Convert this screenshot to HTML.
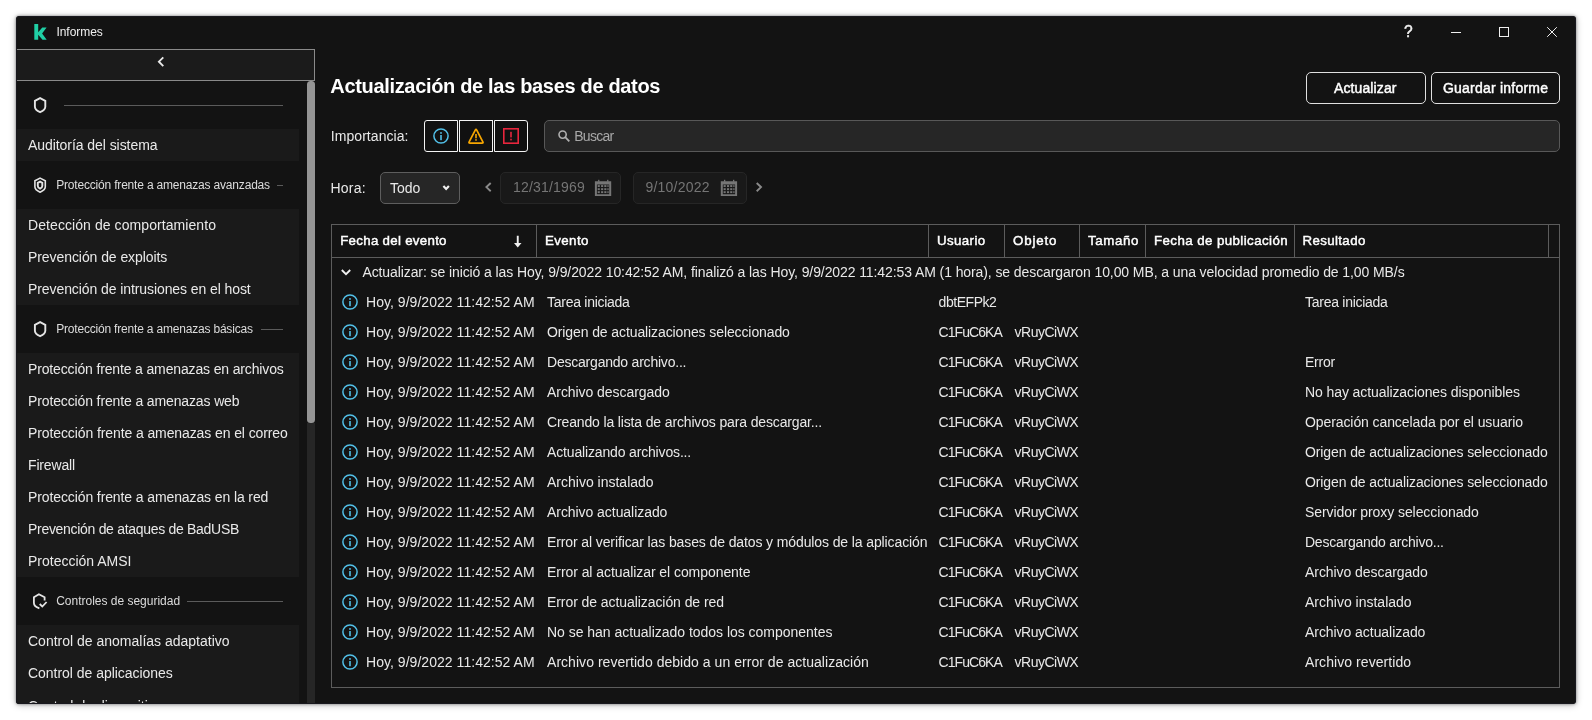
<!DOCTYPE html>
<html lang="es"><head><meta charset="utf-8"><title>Informes</title>
<style>
html,body{margin:0;padding:0;background:#fff;}
body{width:1592px;height:720px;position:relative;overflow:hidden;font-family:"Liberation Sans",sans-serif;}
#win{position:absolute;left:16px;top:16px;width:1560px;height:688px;background:#131313;border-radius:3px;overflow:hidden;
}
#shadow{position:absolute;left:16px;top:16px;width:1560px;height:688px;border-radius:3px;box-shadow:0 0 3px rgba(0,0,0,.45),0 1px 7px rgba(0,0,0,.27);}
.abs{position:absolute;}
.t{position:absolute;white-space:nowrap;line-height:20px;height:20px;font-family:"Liberation Sans",sans-serif;}
svg{position:absolute;overflow:visible;}
</style></head><body>
<div id="shadow"></div>
<div id="win"></div>
<div id="ui" class="abs" style="left:16px;top:16px;width:1560px;height:688px;overflow:hidden;border-radius:3px;will-change:transform;"><div class="abs" style="left:-16px;top:-16px;width:1592px;height:720px;">

<div class="abs" style="left:16px;top:49px;width:298px;height:30px;background:#1b1b1b;border:1px solid #8a8a8a;border-left:none;"></div>
<svg style="left:157px;top:56px" width="8" height="12" viewBox="0 0 8 12"><path d="M6.3 1.3 L1.9 5.7 L6.3 10.1" fill="none" stroke="#e8e8e8" stroke-width="1.9"/></svg>
<div class="abs" style="left:16px;top:129px;width:283px;height:32px;background:#1a1a1a;"></div>
<div class="abs" style="left:16px;top:209px;width:283px;height:96px;background:#1a1a1a;"></div>
<div class="abs" style="left:16px;top:353px;width:283px;height:224px;background:#1a1a1a;"></div>
<div class="abs" style="left:16px;top:625px;width:283px;height:79px;background:#1a1a1a;"></div>
<div class="abs" style="left:307px;top:423px;width:8px;height:281px;background:#262626;"></div>
<div class="abs" style="left:307px;top:81px;width:8px;height:342px;background:#959595;border-radius:3.5px;"></div>
<div class="abs" style="left:64px;top:105px;width:219px;height:1px;background:#5b5b5b;"></div>
<div class="abs" style="left:277px;top:185px;width:6px;height:1px;background:#5b5b5b;"></div>
<div class="abs" style="left:261px;top:329px;width:22px;height:1px;background:#5b5b5b;"></div>
<div class="abs" style="left:187.3px;top:601px;width:95.7px;height:1px;background:#5b5b5b;"></div>
<svg style="left:0;top:0" width="320" height="704" viewBox="0 0 320 704">
<path d="M40.1 98.1 L45.3 100.8 V106.8 C45.3 109.1 43.1 110.9 40.1 112.15 C37.1 110.9 34.9 109.1 34.9 106.8 V100.8 Z" fill="none" stroke="#e4e4e4" stroke-width="1.9"/>
<path d="M40.1 178.1 L45.3 180.8 V186.8 C45.3 189.1 43.1 190.9 40.1 192.15 C37.1 190.9 34.9 189.1 34.9 186.8 V180.8 Z" fill="none" stroke="#e4e4e4" stroke-width="1.6"/>
<path d="M40.05 181.7 L42.3 182.9 V186 C42.3 187.2 41.4 188 40.05 188.6 C38.7 188 37.8 187.2 37.8 186 V182.9 Z" fill="none" stroke="#e4e4e4" stroke-width="1.9"/>
<path d="M40.1 322.1 L45.3 324.8 V330.8 C45.3 333.1 43.1 334.9 40.1 336.15 C37.1 334.9 34.9 333.1 34.9 330.8 V324.8 Z" fill="none" stroke="#e4e4e4" stroke-width="1.9"/>
<path d="M44.6 600.4 V597.3 L38.9 594.2 L33.9 597.3 V603 C33.9 605.6 36 607.2 39.4 608.3" fill="none" stroke="#e4e4e4" stroke-width="1.8"/>
<path d="M39.7 604 L42.3 606.5 L46.6 602" fill="none" stroke="#e4e4e4" stroke-width="1.8"/>
</svg>
<svg style="left:0;top:0" width="60" height="48" viewBox="0 0 60 48"><path d="M34.3 24.1 H38.2 V39.8 H34.3 Z M38.2 32.2 L42.3 27.5 H46.6 L42.1 33.6 L46.7 39.8 H42.5 L38.2 34.8 Z" fill="#20cfa5"/></svg>
<div class="abs" style="left:1451px;top:32px;width:10px;height:1px;background:#f0f0f0;"></div>
<div class="abs" style="left:1499px;top:27px;width:8px;height:8px;border:1px solid #f0f0f0;"></div>
<svg style="left:1547px;top:27px" width="10" height="10" viewBox="0 0 10 10"><path d="M0.2 0.2 L9.8 9.8 M9.8 0.2 L0.2 9.8" stroke="#f0f0f0" stroke-width="1" fill="none"/></svg>
<div class="abs" style="left:1306px;top:72px;width:118px;height:30px;border:1px solid #e0e0e0;border-radius:5px;"></div>
<div class="abs" style="left:1431px;top:72px;width:127px;height:30px;border:1px solid #e0e0e0;border-radius:5px;"></div>
<div class="abs" style="left:424px;top:120px;width:32px;height:30px;border:1px solid #f4f4f4;border-radius:3px 0 0 3px;background:#111;"></div>
<div class="abs" style="left:459px;top:120px;width:32px;height:30px;border:1px solid #f4f4f4;border-radius:0;background:#111;"></div>
<div class="abs" style="left:494px;top:120px;width:32px;height:30px;border:1px solid #f4f4f4;border-radius:0 3px 3px 0;background:#111;"></div>
<svg style="left:433px;top:128px" width="16" height="16" viewBox="0 0 16 16"><circle cx="8" cy="8" r="7.1" fill="none" stroke="#52c0e8" stroke-width="1.5"/><rect x="7.2" y="7" width="1.6" height="5.2" fill="#52c0e8"/><rect x="7.2" y="4.1" width="1.6" height="1.7" fill="#52c0e8"/></svg>
<svg style="left:468px;top:128px" width="16" height="16" viewBox="0 0 16 16"><path d="M8.74 2.02 L14.86 13.78 Q15.6 15.2 14 15.2 L2 15.2 Q0.4 15.2 1.14 13.78 L7.26 2.02 Q8 0.6 8.74 2.02 Z" fill="none" stroke="#f7a600" stroke-width="1.7" stroke-linejoin="round"/><rect x="7.2" y="6" width="1.6" height="4.3" fill="#f7a600"/><rect x="7.2" y="11.2" width="1.6" height="1.5" fill="#f7a600"/></svg>
<svg style="left:503px;top:128px" width="16" height="16" viewBox="0 0 16 16"><rect x="0.8" y="0.8" width="14.4" height="14.4" fill="none" stroke="#e8263d" stroke-width="1.6"/><rect x="7.2" y="3.8" width="1.6" height="5.6" fill="#e8263d"/><rect x="7.2" y="10.7" width="1.6" height="1.7" fill="#e8263d"/></svg>
<div class="abs" style="left:544px;top:120px;width:1014px;height:30px;border:1px solid #585858;border-radius:5px;background:#262626;"></div>
<svg style="left:558px;top:130.3px" width="12" height="12" viewBox="0 0 12 12"><circle cx="4.6" cy="4.6" r="3.6" fill="none" stroke="#b0b0b0" stroke-width="1.6"/><path d="M7.2 7.2 L11.3 11.3" stroke="#b0b0b0" stroke-width="1.8" fill="none"/></svg>
<div class="abs" style="left:380px;top:172px;width:78px;height:30px;border:1px solid #5e5e5e;border-radius:5px;background:#262626;"></div>
<svg style="left:0;top:0" width="800" height="220" viewBox="0 0 800 220"><path d="M443.4 186.1 L446.15 188.9 L448.9 186.1" fill="none" stroke="#f0f0f0" stroke-width="2.2"/></svg>
<div class="abs" style="left:500px;top:172px;width:119px;height:30px;border:1px solid #262626;border-radius:5px;background:#191919;"></div>
<div class="abs" style="left:633px;top:172px;width:112px;height:30px;border:1px solid #262626;border-radius:5px;background:#191919;"></div>
<svg style="left:0;top:0" width="800" height="220" viewBox="0 0 800 220"><path d="M490.7 183 L486.4 187.1 L490.7 191.2" fill="none" stroke="#8a8a8a" stroke-width="1.9"/><path d="M756.7 183 L761 187.1 L756.7 191.2" fill="none" stroke="#8a8a8a" stroke-width="1.9"/></svg>
<svg style="left:0;top:0" width="800" height="220" viewBox="0 0 800 220"><path d="M594.9 181.2 H611.2 V196 H594.9 Z M596.9 184.6 V194.2 H609.2 V184.6 Z" fill="#767676" fill-rule="evenodd"/><rect x="598.1" y="179.8" width="1.3" height="2" fill="#767676"/><rect x="607.1" y="179.8" width="1.3" height="2" fill="#767676"/><rect x="597.7" y="185.1" width="2.1" height="1.9" fill="#767676"/><rect x="601.1" y="185.1" width="2.1" height="1.9" fill="#767676"/><rect x="604.3" y="185.1" width="2.1" height="1.9" fill="#767676"/><rect x="607.4" y="185.1" width="1.2" height="1.9" fill="#767676"/><rect x="597.7" y="188.2" width="2.1" height="1.9" fill="#767676"/><rect x="601.1" y="188.2" width="2.1" height="1.9" fill="#767676"/><rect x="604.3" y="188.2" width="2.1" height="1.9" fill="#767676"/><rect x="607.4" y="188.2" width="1.2" height="1.9" fill="#767676"/><rect x="597.7" y="191.2" width="2.1" height="1.9" fill="#767676"/><rect x="601.1" y="191.2" width="2.1" height="1.9" fill="#767676"/><rect x="604.3" y="191.2" width="2.1" height="1.9" fill="#767676"/><rect x="607.4" y="191.2" width="1.2" height="1.9" fill="#767676"/><path d="M720.8 181.2 H737.1 V196 H720.8 Z M722.8 184.6 V194.2 H735.1 V184.6 Z" fill="#767676" fill-rule="evenodd"/><rect x="724" y="179.8" width="1.3" height="2" fill="#767676"/><rect x="733" y="179.8" width="1.3" height="2" fill="#767676"/><rect x="723.6" y="185.1" width="2.1" height="1.9" fill="#767676"/><rect x="727" y="185.1" width="2.1" height="1.9" fill="#767676"/><rect x="730.2" y="185.1" width="2.1" height="1.9" fill="#767676"/><rect x="733.3" y="185.1" width="1.2" height="1.9" fill="#767676"/><rect x="723.6" y="188.2" width="2.1" height="1.9" fill="#767676"/><rect x="727" y="188.2" width="2.1" height="1.9" fill="#767676"/><rect x="730.2" y="188.2" width="2.1" height="1.9" fill="#767676"/><rect x="733.3" y="188.2" width="1.2" height="1.9" fill="#767676"/><rect x="723.6" y="191.2" width="2.1" height="1.9" fill="#767676"/><rect x="727" y="191.2" width="2.1" height="1.9" fill="#767676"/><rect x="730.2" y="191.2" width="2.1" height="1.9" fill="#767676"/><rect x="733.3" y="191.2" width="1.2" height="1.9" fill="#767676"/></svg>
<div class="abs" style="left:331px;top:224px;width:1227px;height:462px;border:1px solid #5c5c5c;"></div>
<div class="abs" style="left:332px;top:257px;width:1227px;height:1px;background:#5c5c5c;"></div>
<div class="abs" style="left:536px;top:225px;width:1px;height:32px;background:#5c5c5c;"></div>
<div class="abs" style="left:928px;top:225px;width:1px;height:32px;background:#5c5c5c;"></div>
<div class="abs" style="left:1004px;top:225px;width:1px;height:32px;background:#5c5c5c;"></div>
<div class="abs" style="left:1079px;top:225px;width:1px;height:32px;background:#5c5c5c;"></div>
<div class="abs" style="left:1145px;top:225px;width:1px;height:32px;background:#5c5c5c;"></div>
<div class="abs" style="left:1294px;top:225px;width:1px;height:32px;background:#5c5c5c;"></div>
<div class="abs" style="left:1548px;top:225px;width:1px;height:32px;background:#5c5c5c;"></div>
<svg style="left:0;top:0" width="800" height="260" viewBox="0 0 800 260"><path d="M516.8 235.8 H518.7 V242.9 H521.5 L517.75 247.5 L514 242.9 H516.8 Z" fill="#f0f0f0"/></svg>
<svg style="left:340.8px;top:269.2px" width="10" height="7" viewBox="0 0 10 7"><path d="M0.8 1 L5 5.2 L9.2 1" fill="none" stroke="#f0f0f0" stroke-width="1.9"/></svg>
<svg style="left:342px;top:294px" width="16" height="16" viewBox="0 0 16 16"><circle cx="8" cy="8" r="7.1" fill="none" stroke="#52c0e8" stroke-width="1.5"/><rect x="7.2" y="7" width="1.6" height="5.2" fill="#52c0e8"/><rect x="7.2" y="4.1" width="1.6" height="1.7" fill="#52c0e8"/></svg>
<svg style="left:342px;top:324px" width="16" height="16" viewBox="0 0 16 16"><circle cx="8" cy="8" r="7.1" fill="none" stroke="#52c0e8" stroke-width="1.5"/><rect x="7.2" y="7" width="1.6" height="5.2" fill="#52c0e8"/><rect x="7.2" y="4.1" width="1.6" height="1.7" fill="#52c0e8"/></svg>
<svg style="left:342px;top:354px" width="16" height="16" viewBox="0 0 16 16"><circle cx="8" cy="8" r="7.1" fill="none" stroke="#52c0e8" stroke-width="1.5"/><rect x="7.2" y="7" width="1.6" height="5.2" fill="#52c0e8"/><rect x="7.2" y="4.1" width="1.6" height="1.7" fill="#52c0e8"/></svg>
<svg style="left:342px;top:384px" width="16" height="16" viewBox="0 0 16 16"><circle cx="8" cy="8" r="7.1" fill="none" stroke="#52c0e8" stroke-width="1.5"/><rect x="7.2" y="7" width="1.6" height="5.2" fill="#52c0e8"/><rect x="7.2" y="4.1" width="1.6" height="1.7" fill="#52c0e8"/></svg>
<svg style="left:342px;top:414px" width="16" height="16" viewBox="0 0 16 16"><circle cx="8" cy="8" r="7.1" fill="none" stroke="#52c0e8" stroke-width="1.5"/><rect x="7.2" y="7" width="1.6" height="5.2" fill="#52c0e8"/><rect x="7.2" y="4.1" width="1.6" height="1.7" fill="#52c0e8"/></svg>
<svg style="left:342px;top:444px" width="16" height="16" viewBox="0 0 16 16"><circle cx="8" cy="8" r="7.1" fill="none" stroke="#52c0e8" stroke-width="1.5"/><rect x="7.2" y="7" width="1.6" height="5.2" fill="#52c0e8"/><rect x="7.2" y="4.1" width="1.6" height="1.7" fill="#52c0e8"/></svg>
<svg style="left:342px;top:474px" width="16" height="16" viewBox="0 0 16 16"><circle cx="8" cy="8" r="7.1" fill="none" stroke="#52c0e8" stroke-width="1.5"/><rect x="7.2" y="7" width="1.6" height="5.2" fill="#52c0e8"/><rect x="7.2" y="4.1" width="1.6" height="1.7" fill="#52c0e8"/></svg>
<svg style="left:342px;top:504px" width="16" height="16" viewBox="0 0 16 16"><circle cx="8" cy="8" r="7.1" fill="none" stroke="#52c0e8" stroke-width="1.5"/><rect x="7.2" y="7" width="1.6" height="5.2" fill="#52c0e8"/><rect x="7.2" y="4.1" width="1.6" height="1.7" fill="#52c0e8"/></svg>
<svg style="left:342px;top:534px" width="16" height="16" viewBox="0 0 16 16"><circle cx="8" cy="8" r="7.1" fill="none" stroke="#52c0e8" stroke-width="1.5"/><rect x="7.2" y="7" width="1.6" height="5.2" fill="#52c0e8"/><rect x="7.2" y="4.1" width="1.6" height="1.7" fill="#52c0e8"/></svg>
<svg style="left:342px;top:564px" width="16" height="16" viewBox="0 0 16 16"><circle cx="8" cy="8" r="7.1" fill="none" stroke="#52c0e8" stroke-width="1.5"/><rect x="7.2" y="7" width="1.6" height="5.2" fill="#52c0e8"/><rect x="7.2" y="4.1" width="1.6" height="1.7" fill="#52c0e8"/></svg>
<svg style="left:342px;top:594px" width="16" height="16" viewBox="0 0 16 16"><circle cx="8" cy="8" r="7.1" fill="none" stroke="#52c0e8" stroke-width="1.5"/><rect x="7.2" y="7" width="1.6" height="5.2" fill="#52c0e8"/><rect x="7.2" y="4.1" width="1.6" height="1.7" fill="#52c0e8"/></svg>
<svg style="left:342px;top:624px" width="16" height="16" viewBox="0 0 16 16"><circle cx="8" cy="8" r="7.1" fill="none" stroke="#52c0e8" stroke-width="1.5"/><rect x="7.2" y="7" width="1.6" height="5.2" fill="#52c0e8"/><rect x="7.2" y="4.1" width="1.6" height="1.7" fill="#52c0e8"/></svg>
<svg style="left:342px;top:654px" width="16" height="16" viewBox="0 0 16 16"><circle cx="8" cy="8" r="7.1" fill="none" stroke="#52c0e8" stroke-width="1.5"/><rect x="7.2" y="7" width="1.6" height="5.2" fill="#52c0e8"/><rect x="7.2" y="4.1" width="1.6" height="1.7" fill="#52c0e8"/></svg>
<span class="t" id="t1" style="left:56.40px;top:21.84px;font-size:12px;font-weight:400;color:#f0f0f0;letter-spacing:-0.029px;">Informes</span>
<span class="t" id="t2" style="left:1404.00px;top:21.99px;font-size:15.6px;font-weight:400;color:#f0f0f0;-webkit-text-stroke:0.45px #f0f0f0;">?</span>
<span class="t" id="t3" style="left:28.00px;top:135.15px;font-size:14px;font-weight:400;color:#e9e9e9;letter-spacing:-0.060px;">Auditoría del sistema</span>
<span class="t" id="t4" style="left:28.00px;top:215.15px;font-size:14px;font-weight:400;color:#e9e9e9;letter-spacing:0.077px;">Detección de comportamiento</span>
<span class="t" id="t5" style="left:28.00px;top:247.15px;font-size:14px;font-weight:400;color:#e9e9e9;letter-spacing:-0.071px;">Prevención de exploits</span>
<span class="t" id="t6" style="left:28.00px;top:279.15px;font-size:14px;font-weight:400;color:#e9e9e9;letter-spacing:-0.086px;">Prevención de intrusiones en el host</span>
<span class="t" id="t7" style="left:28.00px;top:359.15px;font-size:14px;font-weight:400;color:#e9e9e9;letter-spacing:-0.146px;">Protección frente a amenazas en archivos</span>
<span class="t" id="t8" style="left:28.00px;top:391.15px;font-size:14px;font-weight:400;color:#e9e9e9;letter-spacing:-0.129px;">Protección frente a amenazas web</span>
<span class="t" id="t9" style="left:28.00px;top:423.15px;font-size:14px;font-weight:400;color:#e9e9e9;letter-spacing:-0.100px;">Protección frente a amenazas en el correo</span>
<span class="t" id="t10" style="left:28.00px;top:455.15px;font-size:14px;font-weight:400;color:#e9e9e9;letter-spacing:-0.157px;">Firewall</span>
<span class="t" id="t11" style="left:28.00px;top:487.15px;font-size:14px;font-weight:400;color:#e9e9e9;letter-spacing:-0.108px;">Protección frente a amenazas en la red</span>
<span class="t" id="t12" style="left:28.00px;top:519.15px;font-size:14px;font-weight:400;color:#e9e9e9;letter-spacing:-0.300px;">Prevención de ataques de BadUSB</span>
<span class="t" id="t13" style="left:28.00px;top:551.15px;font-size:14px;font-weight:400;color:#e9e9e9;letter-spacing:0.000px;">Protección AMSI</span>
<span class="t" id="t14" style="left:28.00px;top:631.15px;font-size:14px;font-weight:400;color:#e9e9e9;letter-spacing:0.000px;">Control de anomalías adaptativo</span>
<span class="t" id="t15" style="left:28.00px;top:663.15px;font-size:14px;font-weight:400;color:#e9e9e9;letter-spacing:-0.032px;">Control de aplicaciones</span>
<span class="t" id="t16" style="left:28.00px;top:695.85px;font-size:14px;font-weight:400;color:#e9e9e9;letter-spacing:0.045px;">Control de dispositivos</span>
<span class="t" id="t17" style="left:56.20px;top:174.84px;font-size:12px;font-weight:400;color:#dcdcdc;letter-spacing:-0.186px;">Protección frente a amenazas avanzadas</span>
<span class="t" id="t18" style="left:56.20px;top:318.84px;font-size:12px;font-weight:400;color:#dcdcdc;letter-spacing:-0.191px;">Protección frente a amenazas básicas</span>
<span class="t" id="t19" style="left:56.20px;top:590.84px;font-size:12px;font-weight:400;color:#dcdcdc;letter-spacing:-0.010px;">Controles de seguridad</span>
<span class="t" id="t20" style="left:330.30px;top:76.07px;font-size:20px;font-weight:700;color:#fff;letter-spacing:-0.326px;">Actualización de las bases de datos</span>
<span class="t" id="t21" style="left:1334.00px;top:78.15px;font-size:14px;font-weight:400;color:#fff;-webkit-text-stroke:0.45px #fff;letter-spacing:0.111px;">Actualizar</span>
<span class="t" id="t22" style="left:1443.00px;top:78.15px;font-size:14px;font-weight:400;color:#fff;-webkit-text-stroke:0.45px #fff;letter-spacing:0.214px;">Guardar informe</span>
<span class="t" id="t23" style="left:330.80px;top:126.15px;font-size:14px;font-weight:400;color:#e9e9e9;letter-spacing:0.055px;">Importancia:</span>
<span class="t" id="t24" style="left:574.30px;top:126.15px;font-size:14px;font-weight:400;color:#a8a8a8;letter-spacing:-0.760px;">Buscar</span>
<span class="t" id="t25" style="left:330.50px;top:178.15px;font-size:14px;font-weight:400;color:#e9e9e9;letter-spacing:0.200px;">Hora:</span>
<span class="t" id="t26" style="left:390.00px;top:178.15px;font-size:14px;font-weight:400;color:#e9e9e9;letter-spacing:0.000px;">Todo</span>
<span class="t" id="t27" style="left:513.00px;top:177.15px;font-size:14px;font-weight:400;color:#757575;letter-spacing:0.200px;">12/31/1969</span>
<span class="t" id="t28" style="left:645.50px;top:177.15px;font-size:14px;font-weight:400;color:#757575;letter-spacing:0.213px;">9/10/2022</span>
<span class="t" id="t29" style="left:340.20px;top:230.79px;font-size:13.3px;font-weight:400;color:#fff;-webkit-text-stroke:0.45px #fff;letter-spacing:0.287px;">Fecha del evento</span>
<span class="t" id="t30" style="left:545.00px;top:230.79px;font-size:13.3px;font-weight:400;color:#fff;-webkit-text-stroke:0.45px #fff;letter-spacing:0.400px;">Evento</span>
<span class="t" id="t31" style="left:937.00px;top:230.79px;font-size:13.3px;font-weight:400;color:#fff;-webkit-text-stroke:0.45px #fff;letter-spacing:0.383px;">Usuario</span>
<span class="t" id="t32" style="left:1013.00px;top:230.79px;font-size:13.3px;font-weight:400;color:#fff;-webkit-text-stroke:0.45px #fff;letter-spacing:0.860px;">Objeto</span>
<span class="t" id="t33" style="left:1088.00px;top:230.79px;font-size:13.3px;font-weight:400;color:#fff;-webkit-text-stroke:0.45px #fff;letter-spacing:0.600px;">Tamaño</span>
<span class="t" id="t34" style="left:1154.00px;top:230.79px;font-size:13.3px;font-weight:400;color:#fff;-webkit-text-stroke:0.45px #fff;letter-spacing:0.421px;">Fecha de publicación</span>
<span class="t" id="t35" style="left:1302.50px;top:230.79px;font-size:13.3px;font-weight:400;color:#fff;-webkit-text-stroke:0.45px #fff;letter-spacing:0.363px;">Resultado</span>
<span class="t" id="t36" style="left:362.40px;top:262.15px;font-size:14px;font-weight:400;color:#e9e9e9;letter-spacing:-0.092px;">Actualizar: se inició a las Hoy, 9/9/2022 10:42:52 AM, finalizó a las Hoy, 9/9/2022 11:42:53 AM (1 hora), se descargaron 10,00 MB, a una velocidad promedio de 1,00 MB/s</span>
<span class="t" id="t37" style="left:366.00px;top:292.15px;font-size:14px;font-weight:400;color:#e9e9e9;letter-spacing:0.042px;">Hoy, 9/9/2022 11:42:52 AM</span>
<span class="t" id="t38" style="left:547.00px;top:292.15px;font-size:14px;font-weight:400;color:#e9e9e9;letter-spacing:-0.269px;">Tarea iniciada</span>
<span class="t" id="t39" style="left:938.60px;top:292.15px;font-size:14px;font-weight:400;color:#e9e9e9;letter-spacing:-0.457px;">dbtEFPk2</span>
<span class="t" id="t40" style="left:1305.00px;top:292.15px;font-size:14px;font-weight:400;color:#e9e9e9;letter-spacing:-0.269px;">Tarea iniciada</span>
<span class="t" id="t41" style="left:366.00px;top:322.15px;font-size:14px;font-weight:400;color:#e9e9e9;letter-spacing:0.042px;">Hoy, 9/9/2022 11:42:52 AM</span>
<span class="t" id="t42" style="left:547.00px;top:322.15px;font-size:14px;font-weight:400;color:#e9e9e9;letter-spacing:-0.103px;">Origen de actualizaciones seleccionado</span>
<span class="t" id="t43" style="left:938.60px;top:322.15px;font-size:14px;font-weight:400;color:#e9e9e9;letter-spacing:-0.943px;">C1FuC6KA</span>
<span class="t" id="t44" style="left:1014.60px;top:322.15px;font-size:14px;font-weight:400;color:#e9e9e9;letter-spacing:-0.514px;">vRuyCiWX</span>
<span class="t" id="t45" style="left:366.00px;top:352.15px;font-size:14px;font-weight:400;color:#e9e9e9;letter-spacing:0.042px;">Hoy, 9/9/2022 11:42:52 AM</span>
<span class="t" id="t46" style="left:547.00px;top:352.15px;font-size:14px;font-weight:400;color:#e9e9e9;letter-spacing:-0.214px;">Descargando archivo...</span>
<span class="t" id="t47" style="left:938.60px;top:352.15px;font-size:14px;font-weight:400;color:#e9e9e9;letter-spacing:-0.943px;">C1FuC6KA</span>
<span class="t" id="t48" style="left:1014.60px;top:352.15px;font-size:14px;font-weight:400;color:#e9e9e9;letter-spacing:-0.514px;">vRuyCiWX</span>
<span class="t" id="t49" style="left:1305.00px;top:352.15px;font-size:14px;font-weight:400;color:#e9e9e9;letter-spacing:-0.250px;">Error</span>
<span class="t" id="t50" style="left:366.00px;top:382.15px;font-size:14px;font-weight:400;color:#e9e9e9;letter-spacing:0.042px;">Hoy, 9/9/2022 11:42:52 AM</span>
<span class="t" id="t51" style="left:547.00px;top:382.15px;font-size:14px;font-weight:400;color:#e9e9e9;letter-spacing:-0.059px;">Archivo descargado</span>
<span class="t" id="t52" style="left:938.60px;top:382.15px;font-size:14px;font-weight:400;color:#e9e9e9;letter-spacing:-0.943px;">C1FuC6KA</span>
<span class="t" id="t53" style="left:1014.60px;top:382.15px;font-size:14px;font-weight:400;color:#e9e9e9;letter-spacing:-0.514px;">vRuyCiWX</span>
<span class="t" id="t54" style="left:1305.00px;top:382.15px;font-size:14px;font-weight:400;color:#e9e9e9;letter-spacing:-0.091px;">No hay actualizaciones disponibles</span>
<span class="t" id="t55" style="left:366.00px;top:412.15px;font-size:14px;font-weight:400;color:#e9e9e9;letter-spacing:0.042px;">Hoy, 9/9/2022 11:42:52 AM</span>
<span class="t" id="t56" style="left:547.00px;top:412.15px;font-size:14px;font-weight:400;color:#e9e9e9;letter-spacing:-0.144px;">Creando la lista de archivos para descargar...</span>
<span class="t" id="t57" style="left:938.60px;top:412.15px;font-size:14px;font-weight:400;color:#e9e9e9;letter-spacing:-0.943px;">C1FuC6KA</span>
<span class="t" id="t58" style="left:1014.60px;top:412.15px;font-size:14px;font-weight:400;color:#e9e9e9;letter-spacing:-0.514px;">vRuyCiWX</span>
<span class="t" id="t59" style="left:1305.00px;top:412.15px;font-size:14px;font-weight:400;color:#e9e9e9;letter-spacing:-0.091px;">Operación cancelada por el usuario</span>
<span class="t" id="t60" style="left:366.00px;top:442.15px;font-size:14px;font-weight:400;color:#e9e9e9;letter-spacing:0.042px;">Hoy, 9/9/2022 11:42:52 AM</span>
<span class="t" id="t61" style="left:547.00px;top:442.15px;font-size:14px;font-weight:400;color:#e9e9e9;letter-spacing:-0.157px;">Actualizando archivos...</span>
<span class="t" id="t62" style="left:938.60px;top:442.15px;font-size:14px;font-weight:400;color:#e9e9e9;letter-spacing:-0.943px;">C1FuC6KA</span>
<span class="t" id="t63" style="left:1014.60px;top:442.15px;font-size:14px;font-weight:400;color:#e9e9e9;letter-spacing:-0.514px;">vRuyCiWX</span>
<span class="t" id="t64" style="left:1305.00px;top:442.15px;font-size:14px;font-weight:400;color:#e9e9e9;letter-spacing:-0.108px;">Origen de actualizaciones seleccionado</span>
<span class="t" id="t65" style="left:366.00px;top:472.15px;font-size:14px;font-weight:400;color:#e9e9e9;letter-spacing:0.042px;">Hoy, 9/9/2022 11:42:52 AM</span>
<span class="t" id="t66" style="left:547.00px;top:472.15px;font-size:14px;font-weight:400;color:#e9e9e9;letter-spacing:0.000px;">Archivo instalado</span>
<span class="t" id="t67" style="left:938.60px;top:472.15px;font-size:14px;font-weight:400;color:#e9e9e9;letter-spacing:-0.943px;">C1FuC6KA</span>
<span class="t" id="t68" style="left:1014.60px;top:472.15px;font-size:14px;font-weight:400;color:#e9e9e9;letter-spacing:-0.514px;">vRuyCiWX</span>
<span class="t" id="t69" style="left:1305.00px;top:472.15px;font-size:14px;font-weight:400;color:#e9e9e9;letter-spacing:-0.108px;">Origen de actualizaciones seleccionado</span>
<span class="t" id="t70" style="left:366.00px;top:502.15px;font-size:14px;font-weight:400;color:#e9e9e9;letter-spacing:0.042px;">Hoy, 9/9/2022 11:42:52 AM</span>
<span class="t" id="t71" style="left:547.00px;top:502.15px;font-size:14px;font-weight:400;color:#e9e9e9;letter-spacing:-0.056px;">Archivo actualizado</span>
<span class="t" id="t72" style="left:938.60px;top:502.15px;font-size:14px;font-weight:400;color:#e9e9e9;letter-spacing:-0.943px;">C1FuC6KA</span>
<span class="t" id="t73" style="left:1014.60px;top:502.15px;font-size:14px;font-weight:400;color:#e9e9e9;letter-spacing:-0.514px;">vRuyCiWX</span>
<span class="t" id="t74" style="left:1305.00px;top:502.15px;font-size:14px;font-weight:400;color:#e9e9e9;letter-spacing:-0.077px;">Servidor proxy seleccionado</span>
<span class="t" id="t75" style="left:366.00px;top:532.15px;font-size:14px;font-weight:400;color:#e9e9e9;letter-spacing:0.042px;">Hoy, 9/9/2022 11:42:52 AM</span>
<span class="t" id="t76" style="left:547.00px;top:532.15px;font-size:14px;font-weight:400;color:#e9e9e9;letter-spacing:-0.111px;">Error al verificar las bases de datos y módulos de la aplicación</span>
<span class="t" id="t77" style="left:938.60px;top:532.15px;font-size:14px;font-weight:400;color:#e9e9e9;letter-spacing:-0.943px;">C1FuC6KA</span>
<span class="t" id="t78" style="left:1014.60px;top:532.15px;font-size:14px;font-weight:400;color:#e9e9e9;letter-spacing:-0.514px;">vRuyCiWX</span>
<span class="t" id="t79" style="left:1305.00px;top:532.15px;font-size:14px;font-weight:400;color:#e9e9e9;letter-spacing:-0.238px;">Descargando archivo...</span>
<span class="t" id="t80" style="left:366.00px;top:562.15px;font-size:14px;font-weight:400;color:#e9e9e9;letter-spacing:0.042px;">Hoy, 9/9/2022 11:42:52 AM</span>
<span class="t" id="t81" style="left:547.00px;top:562.15px;font-size:14px;font-weight:400;color:#e9e9e9;letter-spacing:-0.062px;">Error al actualizar el componente</span>
<span class="t" id="t82" style="left:938.60px;top:562.15px;font-size:14px;font-weight:400;color:#e9e9e9;letter-spacing:-0.943px;">C1FuC6KA</span>
<span class="t" id="t83" style="left:1014.60px;top:562.15px;font-size:14px;font-weight:400;color:#e9e9e9;letter-spacing:-0.514px;">vRuyCiWX</span>
<span class="t" id="t84" style="left:1305.00px;top:562.15px;font-size:14px;font-weight:400;color:#e9e9e9;letter-spacing:-0.059px;">Archivo descargado</span>
<span class="t" id="t85" style="left:366.00px;top:592.15px;font-size:14px;font-weight:400;color:#e9e9e9;letter-spacing:0.042px;">Hoy, 9/9/2022 11:42:52 AM</span>
<span class="t" id="t86" style="left:547.00px;top:592.15px;font-size:14px;font-weight:400;color:#e9e9e9;letter-spacing:-0.071px;">Error de actualización de red</span>
<span class="t" id="t87" style="left:938.60px;top:592.15px;font-size:14px;font-weight:400;color:#e9e9e9;letter-spacing:-0.943px;">C1FuC6KA</span>
<span class="t" id="t88" style="left:1014.60px;top:592.15px;font-size:14px;font-weight:400;color:#e9e9e9;letter-spacing:-0.514px;">vRuyCiWX</span>
<span class="t" id="t89" style="left:1305.00px;top:592.15px;font-size:14px;font-weight:400;color:#e9e9e9;letter-spacing:0.000px;">Archivo instalado</span>
<span class="t" id="t90" style="left:366.00px;top:622.15px;font-size:14px;font-weight:400;color:#e9e9e9;letter-spacing:0.042px;">Hoy, 9/9/2022 11:42:52 AM</span>
<span class="t" id="t91" style="left:547.00px;top:622.15px;font-size:14px;font-weight:400;color:#e9e9e9;letter-spacing:-0.024px;">No se han actualizado todos los componentes</span>
<span class="t" id="t92" style="left:938.60px;top:622.15px;font-size:14px;font-weight:400;color:#e9e9e9;letter-spacing:-0.943px;">C1FuC6KA</span>
<span class="t" id="t93" style="left:1014.60px;top:622.15px;font-size:14px;font-weight:400;color:#e9e9e9;letter-spacing:-0.514px;">vRuyCiWX</span>
<span class="t" id="t94" style="left:1305.00px;top:622.15px;font-size:14px;font-weight:400;color:#e9e9e9;letter-spacing:-0.056px;">Archivo actualizado</span>
<span class="t" id="t95" style="left:366.00px;top:652.15px;font-size:14px;font-weight:400;color:#e9e9e9;letter-spacing:0.042px;">Hoy, 9/9/2022 11:42:52 AM</span>
<span class="t" id="t96" style="left:547.00px;top:652.15px;font-size:14px;font-weight:400;color:#e9e9e9;letter-spacing:0.039px;">Archivo revertido debido a un error de actualización</span>
<span class="t" id="t97" style="left:938.60px;top:652.15px;font-size:14px;font-weight:400;color:#e9e9e9;letter-spacing:-0.943px;">C1FuC6KA</span>
<span class="t" id="t98" style="left:1014.60px;top:652.15px;font-size:14px;font-weight:400;color:#e9e9e9;letter-spacing:-0.514px;">vRuyCiWX</span>
<span class="t" id="t99" style="left:1305.00px;top:652.15px;font-size:14px;font-weight:400;color:#e9e9e9;letter-spacing:0.062px;">Archivo revertido</span>

</div><div class="abs" style="left:0;top:0;width:1558px;height:686px;border:1px solid #18181e;border-radius:3px;"></div></div></body></html>
